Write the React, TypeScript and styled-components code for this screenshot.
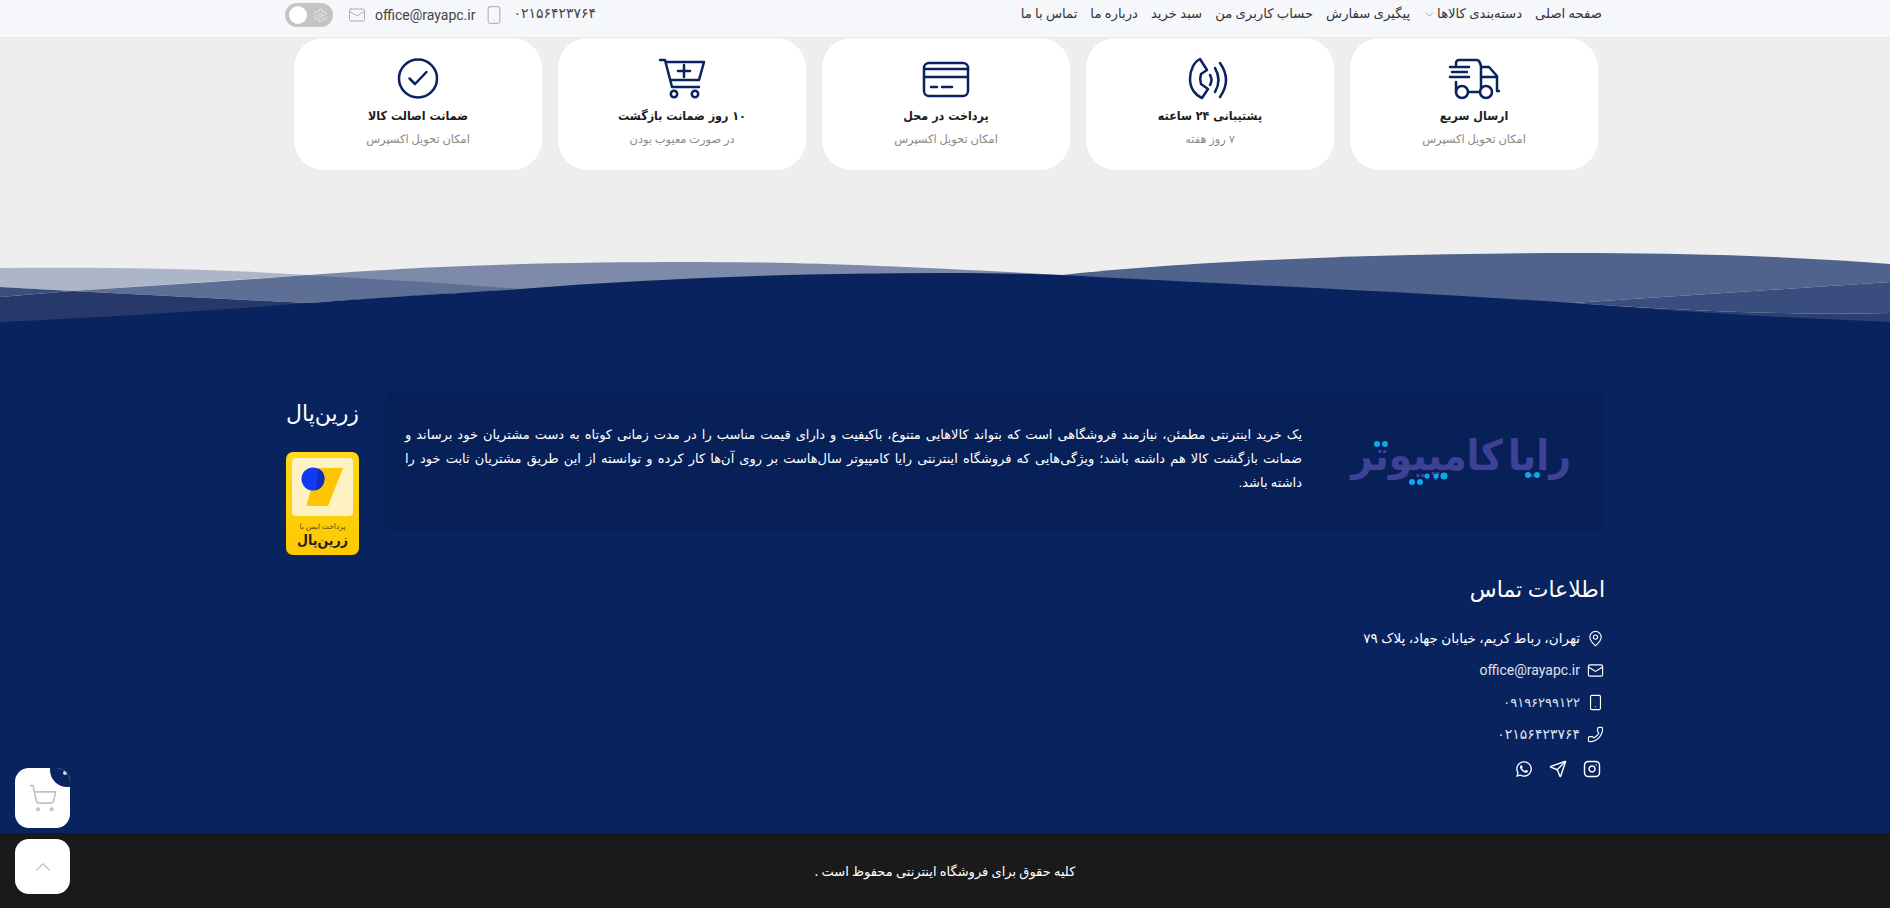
import React from "react";
import styled, { createGlobalStyle } from "styled-components";
import { Mail, Smartphone, Settings, ChevronDown, MapPin, Phone, Instagram, Send, ChevronUp, ShoppingCart } from "lucide-react";
import { FaWhatsapp } from "react-icons/fa";

const NAVY = "#09235f";
const FONT = `Roboto, "DejaVu Sans", sans-serif`;
const COND = `"DejaVu Sans Condensed", "DejaVu Sans", sans-serif`;

const Global = createGlobalStyle`
  html, body { margin: 0; padding: 0; background: #eeeeee; overflow: hidden; }
  body { font-family: ${FONT}; }
  * { box-sizing: border-box; }
`;

const Page = styled.div`
  direction: rtl;
  width: 1890px;
  height: 908px;
  display: flex;
  flex-direction: column;
  position: relative;
  overflow: hidden;
`;

const TopBar = styled.header`
  height: 38px;
  flex: none;
  background: #f5f7fb;
  border-bottom: 1px solid #e9e9e9;
  padding: 0 285px;
  display: flex;
  align-items: flex-start;
  justify-content: space-between;
`;

const Nav = styled.nav`
  display: flex;
  gap: 13px;
  padding: 5px 3px 0 0;
`;

const NavLink = styled.a`
  font-size: 13.2px;
  line-height: 18px;
  color: #333;
  display: inline-flex;
  align-items: center;
  gap: 1px;
  white-space: nowrap;
`;

const Tools = styled.div`
  display: flex;
  align-items: center;
  gap: 9px;
  padding-top: 3px;
`;

const ToolText = styled.span`
  font-size: 14px;
  line-height: 20px;
  color: #444;
  direction: ltr;
`;

const PhoneText = styled(ToolText)`
  margin-top: -5px;
`;

const Toggle = styled.div`
  width: 48px;
  height: 24px;
  border-radius: 12px;
  background: #c4c4c4;
  margin-right: 6px;
  display: flex;
  align-items: center;
  padding-left: 4px;
  direction: ltr;
  color: #efefef;
  &::before {
    content: "";
    width: 18px;
    height: 18px;
    border-radius: 50%;
    background: #fff;
    margin-right: 6px;
  }
`;

const Cards = styled.section`
  display: grid;
  grid-template-columns: repeat(5, 248px);
  column-gap: 16px;
  padding: 0 292px 0 0;
  flex: none;
  height: 132px;
`;

const Card = styled.article`
  background: #fff;
  border-radius: 30px;
  padding: 19px 0 0;
  display: flex;
  flex-direction: column;
  align-items: center;
  height: 132px;
`;

const CardTitle = styled.h3`
  margin: 7px 0 0;
  font-family: ${COND};
  font-size: 12.4px;
  line-height: 20px;
  font-weight: 700;
  color: #1c1c1c;
`;

const CardSub = styled.p`
  margin: 5px 0 0;
  font-size: 11.4px;
  line-height: 16px;
  color: #8a8a8a;
`;

const IconSvg = styled.svg`
  width: 48px;
  height: 42px;
  overflow: visible;
  fill: none;
  stroke: ${NAVY};
  stroke-width: 2.5;
  stroke-linecap: round;
  stroke-linejoin: round;
`;

const WaveBox = styled.svg`
  display: block;
  flex: none;
  width: 1890px;
  height: 152px;
`;

const Footer = styled.footer`
  background: ${NAVY};
  flex: 1;
  padding: 70px 285px 0;
  color: #fff;
`;

const TopRow = styled.div`
  display: flex;
  gap: 26px;
  align-items: flex-start;
`;

const About = styled.div`
  width: 1220px;
  height: 138px;
  border-radius: 8px;
  background: #072058;
  display: flex;
  align-items: center;
  padding: 0 0 0 20px;
`;

const LogoBox = styled.div`
  width: 288px;
  margin-left: 15px;
  flex: none;
  position: relative;
  height: 70px;
  padding-bottom: 12px;
  display: flex;
  align-items: center;
  justify-content: center;
`;

const LogoText = styled.span`
  font-family: ${COND};
  font-size: 42px;
  font-weight: 700;
  word-spacing: -8px;
  color: #3e4296;
  white-space: nowrap;
`;

const LogoDots = styled.svg`
  position: absolute;
  left: 0;
  top: 0;
  width: 288px;
  height: 70px;
`;

const AboutText = styled.div`
  flex: 1;
  min-width: 0;
  padding-bottom: 4px;
`;

const AboutLine = styled.p<{ $last?: boolean }>`
  margin: 0;
  font-size: 13px;
  line-height: 24px;
  color: #fff;
  text-align: justify;
  text-align-last: ${(p) => (p.$last ? "right" : "justify")};
`;

const Zarin = styled.div`
  width: 73px;
  flex: none;
  padding-top: 7px;
`;

const BlockTitle = styled.h4`
  margin: 0;
  font-size: 22px;
  line-height: 30px;
  font-weight: 400;
  color: #fff;
  white-space: nowrap;
`;

const Badge = styled.div`
  margin-top: 23px;
  width: 73px;
  height: 103px;
  border-radius: 7px;
  background: linear-gradient(#ffd91a, #fdc800);
  padding: 6px;
  text-align: center;
`;

const BadgeInner = styled.div`
  height: 58px;
  background: #fff2c2;
  border-radius: 4px;
`;

const BadgeSmall = styled.div`
  font-size: 7.5px;
  line-height: 10px;
  margin-top: 6px;
  color: #5a4a00;
  white-space: nowrap;
`;

const BadgeBig = styled.div`
  font-family: ${COND};
  font-size: 14px;
  line-height: 17px;
  font-weight: 700;
  color: #1d1d1d;
  white-space: nowrap;
`;

const Contact = styled.div`
  margin-top: 20px;
`;

const ContactList = styled.ul`
  list-style: none;
  margin: 17px 0 0;
  padding: 0 1px 0 0;
  display: flex;
  flex-direction: column;
`;

const ContactRow = styled.li<{ $size?: number; $strong?: boolean }>`
  height: 32px;
  display: flex;
  align-items: center;
  gap: 7px;
  font-size: ${(p) => p.$size ?? 14}px;
  font-weight: ${(p) => (p.$strong ? 500 : 400)};
  color: ${(p) => (p.$strong ? "#fff" : "#dfe3ee")};
`;

const FlippedPhone = styled(Phone)`
  transform: scaleX(-1);
  color: #fff;
`;

const Socials = styled.div`
  display: flex;
  gap: 16px;
  padding: 10px 4px 0 0;
`;

const Copyright = styled.div`
  height: 75px;
  flex: none;
  background: #1a1a1a;
  color: #fff;
  font-size: 13px;
  font-weight: 500;
  display: flex;
  align-items: center;
  justify-content: center;
  padding-top: 2px;
`;

const FloatBtn = styled.button<{ $top: number; $h: number }>`
  position: absolute;
  left: 15px;
  top: ${(p) => p.$top}px;
  width: 55px;
  height: ${(p) => p.$h}px;
  border: 0;
  border-radius: 14px;
  background: #fff;
  display: flex;
  align-items: center;
  justify-content: center;
  color: #c2c2c2;
  overflow: hidden;
  padding: 0;
`;

const Notch = styled.span`
  position: absolute;
  left: 35px;
  top: -15px;
  width: 34px;
  height: 34px;
  border-radius: 50%;
  background: ${NAVY};
  &::after {
    content: "";
    position: absolute;
    left: 13px;
    top: 18px;
    width: 4px;
    height: 4px;
    border-radius: 50%;
    background: #d5d9e5;
  }
`;

const Truck = () => (
  <IconSvg viewBox="0 0 48 42">
    <path d="M6 8V6a3 3 0 0 1 3-3h17a4 4 0 0 1 4 3l1 3v22" />
    <path d="M6 25v10" />
    <path d="M31 10h8l8 9v15h2M31 20h16" />
    <path d="M0 10h19M2 15h15M0 20h19" />
    <circle cx="12" cy="35" r="6" />
    <circle cx="36" cy="35" r="6" />
    <path d="M18 35h12" />
  </IconSvg>
);

const Support = () => (
  <IconSvg viewBox="0 0 48 42">
    <path d="M14 2l7 11-6 4c-1 3-1 7 0 10l7 5-6 9C9 38 4 31 4 22 4 13 8 5 14 2z" />
    <path d="M24 18q3 5 0 10M29 11q7 12 0 24M34 6q12 17 0 34" />
  </IconSvg>
);

const CardIcon = () => (
  <IconSvg viewBox="0 0 48 42">
    <rect x="2" y="6" width="44" height="33" rx="5" />
    <path d="M2 12h44M2 20h44M9 30h6M20 30h10" />
  </IconSvg>
);

const CartPlus = () => (
  <IconSvg viewBox="0 0 48 42">
    <path d="M2 3h5l7 27h27" />
    <path d="M9 5h37l-5 18H13" />
    <path d="M26 8v12M20 14h12" />
    <circle cx="16" cy="37" r="3.2" />
    <circle cx="37" cy="37" r="3.2" />
  </IconSvg>
);

const Check = () => (
  <IconSvg viewBox="0 0 48 42">
    <circle cx="24" cy="21.5" r="19" />
    <path d="M15.5 21.5l5.5 5.5 11.5-12" />
  </IconSvg>
);

const cards = [
  { t: "ارسال سریع", s: "امکان تحویل اکسپرس", I: Truck },
  { t: "پشتیبانی ۲۴ ساعته", s: "۷ روز هفته", I: Support },
  { t: "پرداخت در محل", s: "امکان تحویل اکسپرس", I: CardIcon },
  { t: "۱۰ روز ضمانت بازگشت", s: "در صورت معیوب بودن", I: CartPlus },
  { t: "ضمانت اصالت کالا", s: "امکان تحویل اکسپرس", I: Check },
];

const links = ["صفحه اصلی", "دسته‌بندی کالاها", "پیگیری سفارش", "حساب کاربری من", "سبد خرید", "درباره ما", "تماس با ما"];

const Wave = () => (
  <WaveBox viewBox="0 0 1890 152">
    <g transform="translate(0,-170)">
      <path fill="#adb5c9" d="M0 268C100 267 200 268 307 275L72 291L0 287Z" />
      <path fill="#7e8aa9" d="M307 275C440 265 560 262 693 262C800 262 900 266 1062 275L945 290L520 300Z" />
      <path fill="#5d6f95" d="M72 291C150 286 230 281 307 275C380 280 450 283 520 289L307 303Z" />
      <path fill="#3b4f7e" d="M0 287L72 291L0 297Z" />
      <path fill="#27396b" d="M0 297L72 291L307 303L300 330H0Z" />
      <path fill="#50638c" d="M1062 275C1200 260 1400 253 1572 253C1700 253 1800 257 1890 264V282L1572 303L1300 300Z" />
      <path fill="#394e7e" d="M1572 303L1890 282V313C1800 315 1700 312 1572 303Z" />
      <path fill="#2b3f70" d="M1572 303C1700 312 1800 315 1890 313V330H1572Z" />
      <path fill={NAVY} d="M0 322C110 317 210 311 307 303C400 296 460 293 520 289C660 278 800 273 945 273C990 273 1030 274 1062 275C1200 283 1400 291 1572 303C1680 312 1790 318 1890 322V343H0Z" />
    </g>
  </WaveBox>
);

export default function App() {
  return (
    <Page>
      <Global />
      <TopBar>
        <Nav>
          {links.map((l, i) => (
            <NavLink key={l}>
              {l}
              {i === 1 && <ChevronDown size={13} strokeWidth={1} color="#666" />}
            </NavLink>
          ))}
        </Nav>
        <Tools>
          <PhoneText>۰۲۱۵۶۴۲۳۷۶۴</PhoneText>
          <Smartphone size={20} strokeWidth={1} color="#999" />
          <ToolText>office@rayapc.ir</ToolText>
          <Mail size={18} strokeWidth={1} color="#999" />
          <Toggle>
            <Settings size={15} strokeWidth={1.2} />
          </Toggle>
        </Tools>
      </TopBar>
      <Cards>
        {cards.map(({ t, s, I }) => (
          <Card key={t}>
            <I />
            <CardTitle>{t}</CardTitle>
            <CardSub>{s}</CardSub>
          </Card>
        ))}
      </Cards>
      <Wave />
      <Footer>
        <TopRow>
          <About>
            <LogoBox>
              <LogoText>رایا کامپیوتر</LogoText>
              <LogoDots viewBox="0 0 288 70" fill="#12a5ee">
                <circle cx="60" cy="18" r="3" />
                <circle cx="68" cy="18" r="3" />
                <circle cx="95" cy="56" r="3" />
                <circle cx="103" cy="56" r="3" />
                <circle cx="110" cy="50" r="2.6" />
                <circle cx="119" cy="50" r="2.6" />
                <circle cx="127" cy="50" r="3.6" />
                <circle cx="211" cy="49" r="3" />
                <circle cx="220" cy="49" r="3" />
              </LogoDots>
            </LogoBox>
            <AboutText>
              <AboutLine>یک خرید اینترنتی مطمئن، نیازمند فروشگاهی است که بتواند کالاهایی متنوع، باکیفیت و دارای قیمت مناسب را در مدت زمانی کوتاه به دست مشتریان خود برساند و</AboutLine>
              <AboutLine>ضمانت بازگشت کالا هم داشته باشد؛ ویژگی‌هایی که فروشگاه اینترنتی رایا کامپیوتر سال‌هاست بر روی آن‌ها کار کرده و توانسته از این طریق مشتریان ثابت خود را</AboutLine>
              <AboutLine $last>داشته باشد.</AboutLine>
            </AboutText>
          </About>
          <Zarin>
            <BlockTitle>زرین‌پال</BlockTitle>
            <Badge>
              <BadgeInner>
                <svg width="61" height="58" viewBox="0 0 61 58">
                  <path d="M26 10h25L36 48H17a2 2 0 0 1-2-3z" fill="#fdc500" />
                  <circle cx="21" cy="21" r="11.5" fill="#1239f5" />
                  <path d="M26 10.6A11.5 11.5 0 0 1 24 32z" fill="#0f2fb8" />
                </svg>
              </BadgeInner>
              <BadgeSmall>پرداخت ایمن با</BadgeSmall>
              <BadgeBig>زرین‌پال</BadgeBig>
            </Badge>
          </Zarin>
        </TopRow>
        <Contact>
          <BlockTitle>اطلاعات تماس</BlockTitle>
          <ContactList>
            <ContactRow $size={13.6} $strong>
              <MapPin size={17} strokeWidth={1.6} />
              تهران، رباط کریم، خیابان جهاد، پلاک ۷۹
            </ContactRow>
            <ContactRow>
              <Mail size={17} strokeWidth={1.6} color="#fff" />
              office@rayapc.ir
            </ContactRow>
            <ContactRow $size={13}>
              <Smartphone size={17} strokeWidth={1.6} color="#fff" />
              ۰۹۱۹۶۲۹۹۱۲۲
            </ContactRow>
            <ContactRow>
              <FlippedPhone size={17} strokeWidth={1.6} />
              ۰۲۱۵۶۴۲۳۷۶۴
            </ContactRow>
          </ContactList>
          <Socials>
            <Instagram size={18} strokeWidth={1.9} />
            <Send size={18} strokeWidth={1.9} />
            <FaWhatsapp size={18} />
          </Socials>
        </Contact>
      </Footer>
      <Copyright>کلیه حقوق برای فروشگاه اینترنتی محفوظ است .</Copyright>
      <FloatBtn $top={768} $h={60} aria-label="cart">
        <ShoppingCart size={30} strokeWidth={1.3} />
        <Notch />
      </FloatBtn>
      <FloatBtn $top={839} $h={55} aria-label="top">
        <ChevronUp size={26} strokeWidth={1} />
      </FloatBtn>
    </Page>
  );
}
